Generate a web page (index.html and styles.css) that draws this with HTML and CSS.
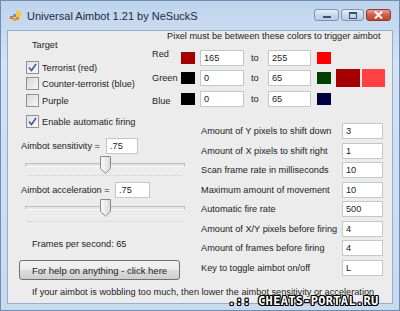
FILE: index.html
```html
<!DOCTYPE html>
<html lang="en">
<head>
    <meta charset="UTF-8">
    <title>Universal Aimbot 1.21 by NeSuckS</title>
    <link rel="stylesheet" href="styles.css">
</head>
<body>
    <div class="window">
        <div class="titlebar">
            <svg class="app-icon" width="12" height="12" viewBox="0 0 12 12">
                <rect x="0" y="6" width="3" height="3" fill="#e2731c"/>
                <rect x="3" y="4" width="3" height="3" fill="#6d8fc8"/>
                <rect x="3" y="8" width="3" height="3" fill="#f0a030"/>
                <rect x="6" y="1" width="5" height="6" fill="#f6c640"/>
                <rect x="6" y="7" width="3" height="3" fill="#e88a2a"/>
            </svg>
            <span class="title">Universal Aimbot 1.21 by NeSuckS</span>
            <div class="caption">
                <span class="cap-btn cap-min"><i></i></span>
                <span class="cap-btn cap-max"><i></i></span>
                <span class="cap-btn cap-close">
                    <svg width="9" height="8" viewBox="0 0 9 8"><path d="M1 0.5 L8 7.5 M8 0.5 L1 7.5" stroke="#fff" stroke-width="2"/></svg>
                </span>
            </div>
        </div>

        <div class="client">
            <div class="left">
                <p class="group-title">Target</p>
                <label class="check first">
                    <span class="box checked">
                        <svg width="11" height="11" viewBox="0 0 11 11"><path d="M2 5.5 L4.5 8.5 L9 2" fill="none" stroke="#3d4f8a" stroke-width="1.4"/></svg>
                    </span>
                    Terrorist (red)
                </label>
                <label class="check"><span class="box"></span>Counter-terrorist (blue)</label>
                <label class="check third"><span class="box"></span>Purple</label>
                <label class="check auto">
                    <span class="box checked">
                        <svg width="11" height="11" viewBox="0 0 11 11"><path d="M2 5.5 L4.5 8.5 L9 2" fill="none" stroke="#3d4f8a" stroke-width="1.4"/></svg>
                    </span>
                    Enable automatic firing
                </label>

                <div class="field sens">
                    <span class="field-label">Aimbot sensitivity =</span>
                    <span class="tb">.75</span>
                </div>
                <div class="slider">
                    <div class="track"></div>
                    <svg class="thumb" width="11" height="18" viewBox="0 0 11 18">
                        <defs>
                            <linearGradient id="tg" x1="0" y1="0" x2="1" y2="0">
                                <stop offset="0" stop-color="#fbfbfb"/>
                                <stop offset="1" stop-color="#d9d9d9"/>
                            </linearGradient>
                        </defs>
                        <path d="M0.5 0.5 H10.5 V12.5 L5.5 17.3 L0.5 12.5 Z" fill="url(#tg)" stroke="#8a8a8a"/>
                    </svg>
                </div>
                <div class="ticks"></div>

                <div class="field accel">
                    <span class="field-label">Aimbot acceleration =</span>
                    <span class="tb">.75</span>
                </div>
                <div class="slider second">
                    <div class="track"></div>
                    <svg class="thumb" width="11" height="18" viewBox="0 0 11 18">
                        <path d="M0.5 0.5 H10.5 V12.5 L5.5 17.3 L0.5 12.5 Z" fill="url(#tg)" stroke="#8a8a8a"/>
                    </svg>
                </div>
                <div class="ticks low"></div>

                <p class="fps">Frames per second: 65</p>
                <button class="help-btn">For help on anything - click here</button>
            </div>

            <div class="right">
                <div class="colors">
                    <p class="colors-head">Pixel must be between these colors to trigger aimbot</p>
                    <div class="color-row">
                        <span class="c-label raise">Red</span>
                        <span class="swatch sw-red-lo"></span>
                        <span class="tb w-lo">165</span>
                        <span class="to">to</span>
                        <span class="tb w-hi">255</span>
                        <span class="swatch sw-red-hi"></span>
                    </div>
                    <div class="color-row">
                        <span class="c-label">Green</span>
                        <span class="swatch sw-black"></span>
                        <span class="tb w-lo">0</span>
                        <span class="to">to</span>
                        <span class="tb w-hi">65</span>
                        <span class="swatch sw-green-hi"></span>
                        <span class="big big-lo"></span>
                        <span class="big big-hi"></span>
                    </div>
                    <div class="color-row last">
                        <span class="c-label drop">Blue</span>
                        <span class="swatch sw-black"></span>
                        <span class="tb w-lo">0</span>
                        <span class="to">to</span>
                        <span class="tb w-hi">65</span>
                        <span class="swatch sw-blue-hi"></span>
                    </div>
                </div>

                <div class="settings">
                    <span class="s-label">Amount of Y pixels to shift down</span><span class="tb">3</span>
                    <span class="s-label">Amount of X pixels to shift right</span><span class="tb">1</span>
                    <span class="s-label">Scan frame rate in milliseconds</span><span class="tb">10</span>
                    <span class="s-label">Maximum amount of movement</span><span class="tb">10</span>
                    <span class="s-label">Automatic fire rate</span><span class="tb">500</span>
                    <span class="s-label">Amount of X/Y pixels before firing</span><span class="tb">4</span>
                    <span class="s-label">Amount of frames before firing</span><span class="tb">4</span>
                    <span class="s-label">Key to toggle aimbot on/off</span><span class="tb">L</span>
                </div>
            </div>

            <p class="hint">If your aimbot is wobbling too much, then lower the aimbot sensitivity or acceleration</p>
        </div>
    </div>
    <div class="watermark">.:: CHEATS-PORTAL.RU ::.</div>
</body>
</html>
```

FILE: styles.css
```css
body{
    margin: 0;
    font-family: "Liberation Sans", Arial, sans-serif;
    font-size: 9.2px;
    color: #1c1c1c;
}
p{
    margin: 0;
}

.window{
    position: relative;
    width: 400px;
    height: 311px;
    box-sizing: border-box;
    border: 1px solid #6f8db2;
    padding: 0 6px 6px;
    background: linear-gradient(#bfd4ed, #d3e2f4 60px, #c8daef);
    display: flex;
    flex-direction: column;
}

.titlebar{
    height: 29px;
    flex-shrink: 0;
    display: flex;
    align-items: center;
    position: relative;
}
.app-icon{
    margin-left: 3px;
}
.title{
    margin-left: 5px;
    font-size: 11px;
    color: #1b2c44;
}
.caption{
    position: absolute;
    right: 2px;
    top: 8px;
    display: flex;
    gap: 2px;
}
.cap-btn{
    height: 12px;
    box-sizing: border-box;
    border: 1px solid #7d94b3;
    border-radius: 3px;
    background: linear-gradient(#e6eef8, #c9d8ea 50%, #b8cbe2);
    display: flex;
    align-items: center;
    justify-content: center;
}
.cap-min{
    width: 25px;
}
.cap-min i{
    width: 8px;
    height: 2px;
    margin-top: 3px;
    background: #3b4f6e;
}
.cap-max{
    width: 23px;
}
.cap-max i{
    width: 6px;
    height: 4px;
    border: 1px solid #3b4f6e;
    border-top-width: 2px;
}
.cap-close{
    width: 25px;
    border-color: #8c3a30;
    background: linear-gradient(#e8a293, #d05e48 50%, #c0452f);
}

.client{
    flex: 1;
    background: #ececec;
    border: 1px solid #97aecb;
    display: grid;
    grid-template-columns: 185px 1fr;
    grid-template-rows: auto 1fr;
}

/* left side */
.left{
    padding-top: 8px;
}
.group-title{
    line-height: 13px;
    margin-left: 24px;
}
.check{
    display: flex;
    align-items: center;
    height: 13px;
    margin-top: 3px;
    padding-left: 18px;
    gap: 3px;
}
.check.first{
    margin-top: 9px;
}
.check.third{
    margin-top: 4px;
}
.check.auto{
    margin-top: 8px;
}
.box{
    width: 13px;
    height: 13px;
    box-sizing: border-box;
    border: 1px solid #8f9194;
    background: linear-gradient(135deg, #d8d8d8, #f6f6f6);
    display: flex;
    align-items: center;
    justify-content: center;
}
.box.checked{
    background: linear-gradient(135deg, #dfe3ec, #f7f8fb);
}

.tb{
    display: block;
    height: 16px;
    box-sizing: border-box;
    border: 1px solid #c3c6ca;
    background: #fff;
    padding-left: 3px;
    line-height: 14px;
}

.field{
    display: flex;
    align-items: center;
    height: 16px;
    padding-left: 13px;
}
.field.sens{
    margin-top: 10px;
}
.field.sens .field-label{
    width: 85px;
}
.field.sens .tb{
    width: 32px;
}
.field.accel{
    margin-top: 6px;
}
.field.accel .field-label{
    width: 94px;
}
.field.accel .tb{
    width: 35px;
}

.slider{
    position: relative;
    height: 18px;
    margin: 2px 0 0 17px;
    width: 160px;
}
.slider.second{
    margin-top: 1px;
}
.track{
    position: absolute;
    left: 0;
    right: 0;
    top: 7px;
    height: 2px;
    background: #e4e4e4;
    border: 1px solid #bdbdbd;
    border-bottom-color: #fafafa;
}
.thumb{
    position: absolute;
    left: 75px;
    top: 0;
}
.ticks{
    margin: 1px 0 0 20px;
    width: 154px;
    border-top: 1px dotted #cfcfcf;
}
.ticks.low{
    margin-top: 4px;
}

.fps{
    margin: 16px 0 0 24px;
    line-height: 13px;
}
.help-btn{
    display: block;
    margin: 9px 0 0 11px;
    width: 161px;
    height: 20px;
    border: 1px solid #707070;
    border-radius: 3px;
    background: linear-gradient(#f3f3f3, #ebebeb 50%, #dddddd 51%, #cfcfcf);
    font: inherit;
    font-size: 9.5px;
    color: inherit;
    padding: 0;
}

/* right side */
.colors{
    margin-left: -41px;
}
.colors-head{
    margin-left: 15px;
    line-height: 11px;
}
.color-row{
    display: flex;
    align-items: center;
    height: 16px;
    margin-top: 4px;
}
.color-row:nth-child(2){
    margin-top: 8px;
}
.color-row.last{
    margin-top: 5px;
}
.c-label{
    width: 29px;
}
.c-label.raise{
    margin-bottom: 8px;
}
.c-label.drop{
    margin-top: 4px;
}
.swatch{
    width: 14px;
    height: 12px;
}
.color-row .w-lo{
    width: 44px;
    margin-left: 5px;
}
.color-row .w-hi{
    width: 43px;
}
.to{
    width: 24px;
    box-sizing: border-box;
    padding-left: 7px;
}
.color-row .tb + .swatch{
    margin-left: 6px;
}
.big{
    width: 24px;
    height: 18px;
    margin: -1px 0;
}
.big.big-lo{
    margin-left: 5px;
}
.big.big-hi{
    width: 23px;
    margin-left: 2px;
}
.sw-red-lo{ background: #a50000; }
.sw-red-hi{ background: #ff0000; }
.sw-black{ background: #000; }
.sw-green-hi{ background: #004100; }
.sw-blue-hi{ background: #000041; }
.big-lo{ background: #a50000; }
.big-hi{ background: #ff4141; }

.settings{
    margin-top: 16px;
    padding-left: 8px;
    display: grid;
    grid-template-columns: 141px 41px;
    grid-auto-rows: 16px;
    row-gap: 3.5px;
    align-items: center;
}

.hint{
    grid-column: 1 / -1;
    margin: 6px 0 0 24px;
    line-height: 13px;
}

.watermark{
    position: absolute;
    left: 228px;
    top: 294px;
    font-family: "DejaVu Sans Mono", monospace;
    font-weight: bold;
    font-size: 12px;
    letter-spacing: 0.3px;
    line-height: 14px;
    color: #fff;
    text-shadow: 1px 0 #000, -1px 0 #000, 0 1px #000, 0 -1px #000, 1px 1px #000, -1px -1px #000, 1px -1px #000, -1px 1px #000;
}
```
